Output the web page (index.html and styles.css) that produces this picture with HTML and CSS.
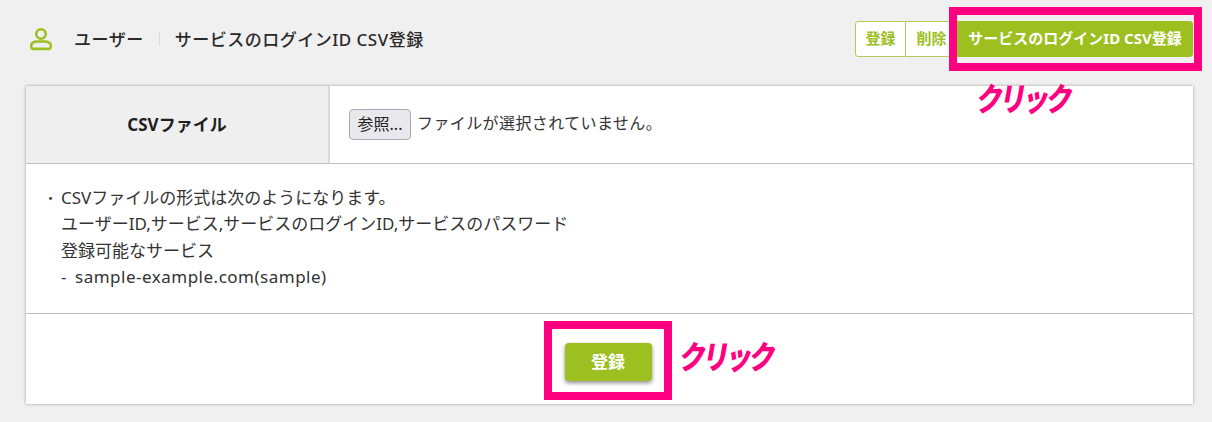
FILE: index.html
```html
<!DOCTYPE html>
<html lang="ja">
<head>
<meta charset="utf-8">
<title>サービスのログインID CSV登録</title>
<link rel="stylesheet" href="styles.css">
</head>
<body>
<div class="page">
  <header class="topbar">
    <div class="crumbs">
      <svg class="user-icon" width="22" height="24" viewBox="0 0 24 25" fill="none" stroke="#9dbf1f" stroke-width="2.8">
        <circle cx="12" cy="7" r="5.2"/>
        <path d="M8 15.3h8a6.7 4 0 0 1 6.7 4v1.6a2.4 2.4 0 0 1-2.4 2.4H3.7a2.4 2.4 0 0 1-2.4-2.4v-1.6a6.7 4 0 0 1 6.7-4z"/>
      </svg>
      <span class="crumb-main">ユーザー</span>
      <span class="crumb-sep"></span>
      <span class="crumb-sub">サービスのログインID CSV登録</span>
    </div>
    <div class="actions">
      <a class="tab tab-first">登録</a>
      <a class="tab tab-mid">削除</a>
      <a class="tab tab-active">サービスのログインID CSV登録</a>
    </div>
  </header>
  <main class="card">
    <div class="file-row">
      <div class="file-label">CSVファイル</div>
      <div class="file-field">
        <span class="browse">参照...</span>
        <span class="file-name">ファイルが選択されていません。</span>
      </div>
    </div>
    <div class="notes">
      <div class="note-item">
        <span class="bullet">・</span>
        <div class="note-lines">
          <p>CSVファイルの形式は次のようになります。</p>
          <p>ユーザーID,サービス,サービスのログインID,サービスのパスワード</p>
          <p>登録可能なサービス</p>
          <p class="sample"><span class="dash">-</span>sample-example.com(sample)</p>
        </div>
      </div>
    </div>
    <div class="submit-row">
      <button class="submit" type="button">登録</button>
    </div>
  </main>
  <div class="mark mark-top"></div>
  <div class="mark mark-bottom"></div>
  <div class="click click-top">クリック</div>
  <div class="click click-bottom">クリック</div>
</div>
</body>
</html>
```
FILE: styles.css
```css
* { box-sizing: border-box; }
html, body { margin: 0; padding: 0; }
body {
  background: #f0f0f0;
  font-family: "Noto Sans", "Noto Sans CJK JP", sans-serif;
  color: #222;
  width: 1212px;
  height: 422px;
  overflow: hidden;
}
.page { position: relative; width: 1212px; height: 422px; padding: 21px 19px 0 26px; }
.topbar { display: flex; justify-content: space-between; align-items: center; height: 36px; margin-bottom: 29px; }
.crumbs { display: flex; align-items: center; padding-left: 4px; }
.user-icon { margin-right: 22px; }
.crumb-main, .crumb-sub { font-size: 17px; font-weight: 500; color: #2a2a2a; line-height: 20px; letter-spacing: 0.5px; padding-top: 1px; }
.crumb-sep { width: 1px; height: 14px; background: #dcdcdc; margin: 0 15px 0 15px; }
.actions { display: flex; align-items: stretch; height: 36px; }
.tab { display: flex; align-items: center; justify-content: center; font-size: 15px; font-weight: 700; border: 1px solid #b3cb56; background: #fff; color: #9dbf1f; white-space: nowrap; padding-bottom: 3px; }
.tab-first { width: 51px; border-radius: 3px 0 0 3px; }
.tab-mid { width: 51px; border-left: 0; border-right: 0; }
.tab-active { width: 236px; background: #9dbf1f; border-color: #9dbf1f; color: #fff; border-radius: 0 3px 3px 0; }
.card { background: #fff; box-shadow: 0 0 3px rgba(0,0,0,.35); height: 318px; display: flex; flex-direction: column; }
.file-row { display: flex; height: 78px; border-bottom: 1px solid #b9c3c9; }
.file-label { width: 304px; background: #efefef; border-right: 2px solid #d5d9dc; display: flex; align-items: center; justify-content: center; font-size: 17px; font-weight: 700; color: #1e1e1e; padding-bottom: 3px; }
.file-field { display: flex; align-items: center; padding-left: 19px; padding-bottom: 1px; font-size: 16px; color: #333; }
.browse { display: flex; align-items: center; justify-content: center; width: 62px; height: 31px; background: #e9e9ed; border: 1px solid #a9a9b4; border-radius: 4px; margin-right: 6px; color: #222; font-size: 16px; padding-bottom: 2px; }
.file-name { line-height: 20px; letter-spacing: 0.4px; padding-bottom: 2px; }
.notes { height: 150px; border-bottom: 1px solid #b9c3c9; padding: 21px 0 0 18px; font-size: 17px; color: #333; }
.note-item { display: flex; }
.bullet { width: 17px; line-height: 26.3px; font-size: 13px; }
.note-lines p { margin: 0; line-height: 26.3px; height: 26.3px; white-space: nowrap; }
.note-lines .sample { letter-spacing: 0.5px; }
.dash { display: inline-block; width: 14px; }
.submit-row { flex: 1; display: flex; justify-content: center; align-items: flex-start; padding-top: 29px; padding-right: 3px; }
.submit { width: 87px; height: 38px; background: #9dbf1f; color: #fff; border: 0; border-radius: 4px; font-family: inherit; font-size: 17px; font-weight: 700; box-shadow: 0 2px 4px rgba(0,0,0,.45); padding: 0 0 3px; }
.mark { position: absolute; border: 8px solid #ff0080; }
.mark-top { left: 949px; top: 7px; width: 253px; height: 64px; }
.mark-bottom { left: 544px; top: 321px; width: 128px; height: 79px; }
.click { position: absolute; font-size: 30px; line-height: 36px; font-weight: 900; color: #ff0080; letter-spacing: -3.5px; transform-origin: left center; transform: skewX(-10deg) scale(0.88, 1.08); white-space: nowrap; }
.click-top { left: 977px; top: 81px; }
.click-bottom { left: 680px; top: 339px; }
```
